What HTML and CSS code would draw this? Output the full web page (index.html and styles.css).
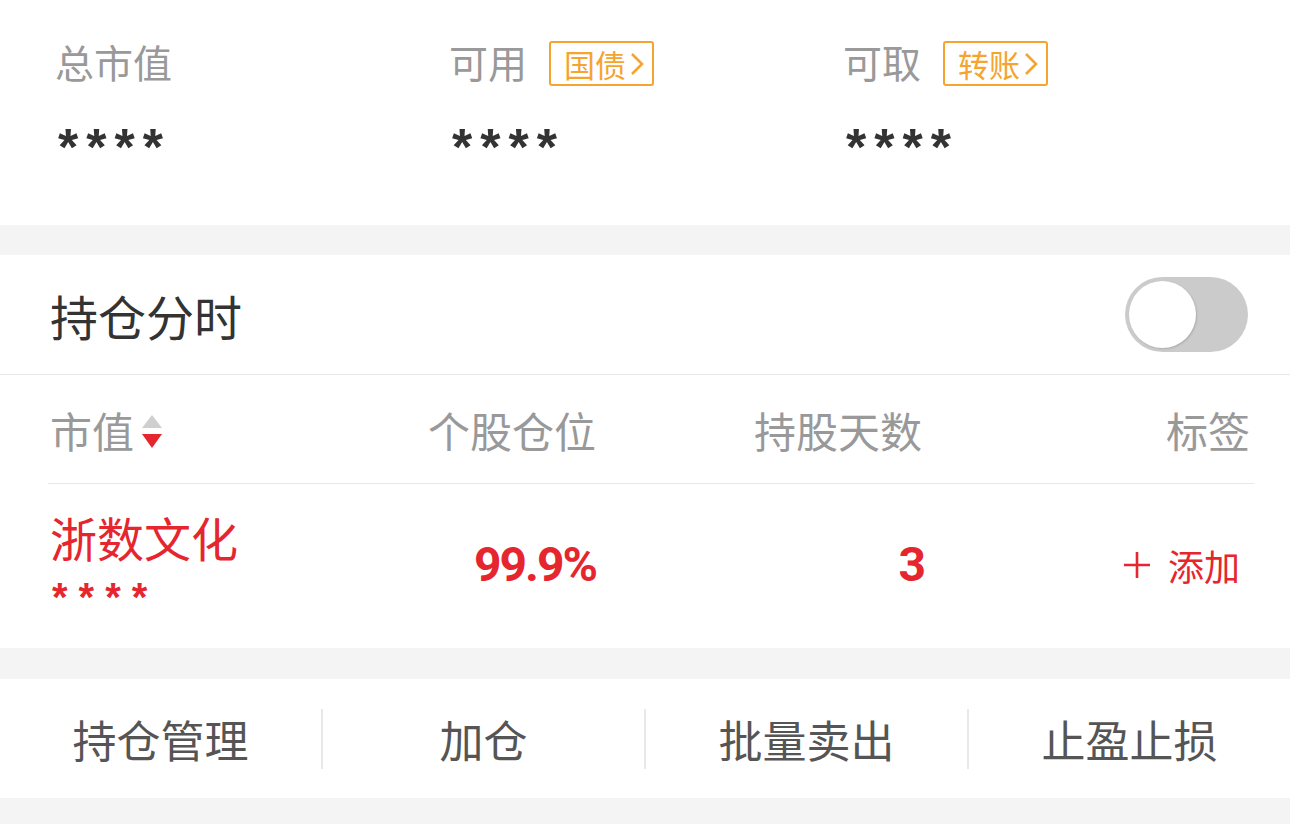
FILE: index.html
```html
<!DOCTYPE html>
<html lang="zh-CN">
  <head>
    <meta charset="UTF-8" />
    <meta name="viewport" content="width=device-width, initial-scale=1.0" />
    <title>持仓</title>
    <link rel="stylesheet" href="styles.css">
  </head>
  <body>
    <div class="summary">
      <div class="summary-item">
        <div class="summary-label">总市值</div>
        <div class="mask">****</div>
      </div>
      <div class="summary-item">
        <div class="summary-label">可用 <span class="tag-btn">国债<svg viewBox="0 0 14 24" class="chev"><path d="M2 2 L12 12 L2 22" /></svg></span></div>
        <div class="mask">****</div>
      </div>
      <div class="summary-item">
        <div class="summary-label">可取 <span class="tag-btn">转账<svg viewBox="0 0 14 24" class="chev"><path d="M2 2 L12 12 L2 22" /></svg></span></div>
        <div class="mask">****</div>
      </div>
    </div>

    <div class="panel">
      <div class="switch-row">
        <span class="switch-title">持仓分时</span>
        <div class="toggle"><div class="knob"></div></div>
      </div>

      <div class="table-head">
        <div class="col-name">市值<span class="sort"><i class="up"></i><i class="down"></i></span></div>
        <div class="col-num">个股仓位</div>
        <div class="col-num">持股天数</div>
        <div class="col-num">标签</div>
      </div>

      <div class="table-row">
        <div class="col-name">
          <div class="stock-name">浙数文化</div>
          <div class="stock-mask">****</div>
        </div>
        <div class="col-num val">99.9%</div>
        <div class="col-num val">3</div>
        <div class="col-num add">
          <svg viewBox="0 0 26 26" class="plus"><path d="M13 0 V26 M0 13 H26" /></svg>
          添加
        </div>
      </div>
    </div>

    <div class="actions">
      <div class="action">持仓管理</div>
      <div class="action">加仓</div>
      <div class="action">批量卖出</div>
      <div class="action">止盈止损</div>
    </div>
  </body>
</html>
```

FILE: styles.css
```css
body {
  margin: 0;
  background-color: #f4f4f4;
  font-family: "Noto Sans CJK SC", "Noto Sans", sans-serif;
  color: #333;
}
.summary {
  display: flex;
  background: white;
  height: 225px;
  padding-left: 55px;
  box-sizing: border-box;
}
.summary-item {
  width: 394px;
  padding-top: 35px;
}
.summary-label {
  display: flex;
  align-items: center;
  font-size: 39px;
  line-height: 52px;
  color: #999;
}
.tag-btn {
  display: inline-flex;
  align-items: center;
  margin-left: 22px;
  margin-top: 5px;
  height: 41px;
  padding: 0 8px 0 13px;
  border: 2px solid #f5a430;
  border-radius: 3px;
  color: #f5a430;
  font-size: 31px;
  line-height: 41px;
}
.chev {
  width: 14px;
  height: 24px;
  margin-left: 4px;
  fill: none;
  stroke: #f5a430;
  stroke-width: 2.6;
}
.mask {
  margin-top: 24px;
  margin-left: 3px;
  font-family: "Liberation Sans", sans-serif;
  font-weight: bold;
  font-size: 52px;
  letter-spacing: 8px;
  line-height: 52px;
  height: 40px;
  color: #333;
  position: relative;
  top: 10px;
}
.panel {
  margin-top: 30px;
  background: white;
}
.switch-row {
  display: flex;
  align-items: center;
  justify-content: space-between;
  height: 119px;
  padding: 0 42px 0 50px;
  border-bottom: 1px solid #e8e8e8;
}
.switch-title {
  font-size: 48px;
  color: #333;
}
.toggle {
  width: 123px;
  height: 75px;
  border-radius: 38px;
  background: #cbcbcb;
  padding: 4px;
  box-sizing: border-box;
}
.knob {
  width: 67px;
  height: 67px;
  border-radius: 50%;
  background: white;
  box-shadow: 1px 1px 2px rgba(0, 0, 0, 0.15);
}
.table-head,
.table-row {
  display: grid;
  grid-template-columns: 300px 246px 326px 328px;
  margin: 0 36px 0 48px;
  padding-left: 2px;
}
.table-head {
  height: 108px;
  align-items: center;
  font-size: 42px;
  color: #999;
  border-bottom: 1px solid #e8e8e8;
}
.col-name {
  display: flex;
  align-items: center;
}
.col-num {
  text-align: right;
}
.sort {
  display: inline-flex;
  flex-direction: column;
  gap: 6px;
  margin-left: 8px;
  margin-top: 4px;
}
.sort i {
  display: block;
  width: 0;
  height: 0;
  border-left: 10px solid transparent;
  border-right: 10px solid transparent;
}
.sort .up {
  border-bottom: 13px solid #cfcfcf;
}
.sort .down {
  border-top: 14px solid #e5262e;
}
.table-row {
  height: 164px;
  align-items: center;
  color: #e5262e;
}
.table-row .col-name {
  flex-direction: column;
  align-items: flex-start;
}
.stock-name {
  font-size: 47px;
  line-height: 60px;
  margin-top: -18px;
}
.stock-mask {
  font-family: "Liberation Sans", sans-serif;
  font-weight: bold;
  font-size: 40px;
  letter-spacing: 11px;
  line-height: 40px;
  height: 30px;
  margin-left: 2px;
  margin-top: 10px;
}
.val {
  font-family: Roboto, "Liberation Sans", sans-serif;
  font-weight: bold;
  font-size: 48px;
  letter-spacing: -2px;
  margin-top: -4px;
}
.val:nth-child(3) {
  margin-right: -2px;
}
.add {
  display: flex;
  align-items: center;
  justify-content: flex-end;
  font-size: 36px;
  margin-right: 10px;
  margin-top: -2px;
}
.plus {
  width: 26px;
  height: 26px;
  margin-right: 18px;
  stroke: #e5262e;
  stroke-width: 2.6;
}
.actions {
  display: flex;
  margin-top: 31px;
  height: 119px;
  background: white;
  align-items: center;
}
.action {
  flex: 1;
  text-align: center;
  font-size: 44px;
  line-height: 60px;
  color: #555;
  border-left: 2px solid #e8e8e8;
}
.action:first-child {
  border-left: none;
}
```
